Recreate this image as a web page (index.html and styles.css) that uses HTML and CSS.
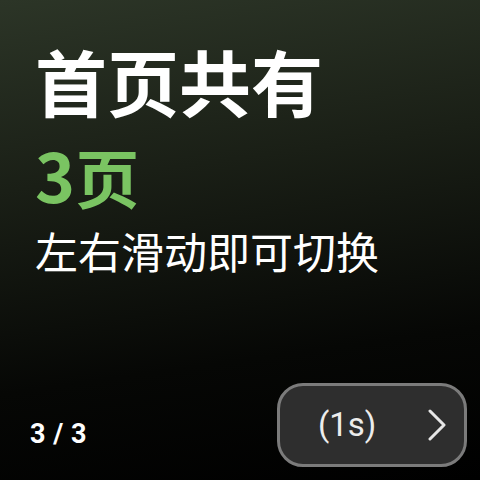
FILE: index.html
```html
<!DOCTYPE html>
<html lang="zh-CN">
<head>
<meta charset="utf-8">
<link rel="stylesheet" href="styles.css">
</head>
<body>
<div class="screen">
  <div class="content">
    <div class="title">首页共有</div>
    <div class="count"><span class="num">3</span>页</div>
    <div class="hint">左右滑动即可切换</div>
  </div>
  <div class="footer">
    <div class="pager">3 / 3</div>
    <div class="next-btn">
      <span class="timer">(1s)</span>
      <svg class="chev" width="20" height="32" viewBox="0 0 20 32">
        <path d="M3 2 L17 16 L3 30" fill="none" stroke="#e6e6e6" stroke-width="3" stroke-linecap="round" stroke-linejoin="round"/>
      </svg>
    </div>
  </div>
</div>
</body>
</html>
```
FILE: styles.css
```css
html, body {
  margin: 0;
  padding: 0;
  background: #000;
}
.screen {
  width: 480px;
  height: 480px;
  box-sizing: border-box;
  display: flex;
  flex-direction: column;
  background: linear-gradient(172deg, #2c3527 0%, #1a1f16 35%, #060705 72%, #000 100%);
  font-family: "Noto Sans CJK SC", "Noto Sans", sans-serif;
  color: #fff;
  overflow: hidden;
}
.content {
  display: flex;
  flex-direction: column;
  padding: 40px 0 0 35px;
}
.title {
  font-size: 72px;
  font-weight: 700;
  line-height: 80px;
}
.count {
  margin-top: 19px;
  font-size: 64px;
  font-weight: 700;
  line-height: 70px;
  color: #7ac462;
}
.num {
  font-size: 68px;
}
.hint {
  margin-top: 15px;
  font-size: 43px;
  font-weight: 400;
  line-height: 50px;
}
.footer {
  margin-top: auto;
  display: flex;
  justify-content: space-between;
  align-items: flex-end;
  padding: 0 13px 13px 30px;
}
.pager {
  font-family: Roboto, "Noto Sans", sans-serif;
  font-size: 27px;
  font-weight: 700;
  line-height: 30px;
  margin-bottom: 18px;
  letter-spacing: 0.5px;
}
.next-btn {
  width: 190px;
  height: 84px;
  box-sizing: border-box;
  border: 3px solid #7b7b7b;
  border-radius: 26px;
  background: #2e2e2e;
  display: flex;
  align-items: center;
  justify-content: space-between;
  padding: 0 17px 0 38px;
}
.timer {
  font-family: Roboto, "Noto Sans", sans-serif;
  font-size: 33px;
  color: #ececec;
  line-height: 40px;
}
.chev {
  display: block;
}
```
